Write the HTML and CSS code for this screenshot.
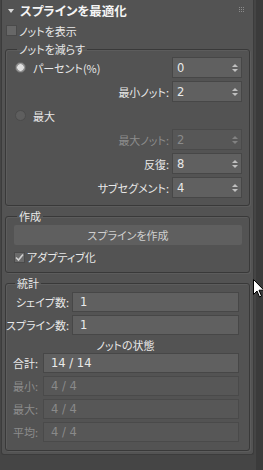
FILE: index.html
```html
<!DOCTYPE html>
<html lang="ja">
<head>
<meta charset="utf-8">
<link rel="stylesheet" href="styles.css">
</head>
<body>
<div class="screen">
  <div class="panel">
    <div class="title">
      <span class="tri"></span>
      <span class="title-text">スプラインを最適化</span>
      <svg class="grip" width="6" height="6" viewBox="0 0 6 6"><g fill="#8a8a8a"><rect x="0" y="0" width="1" height="1"/><rect x="2" y="0" width="1" height="1"/><rect x="4" y="0" width="1" height="1"/><rect x="0" y="2" width="1" height="1"/><rect x="2" y="2" width="1" height="1"/><rect x="4" y="2" width="1" height="1"/><rect x="0" y="4" width="1" height="1"/><rect x="2" y="4" width="1" height="1"/><rect x="4" y="4" width="1" height="1"/></g></svg>
    </div>
    <div class="checkrow top-check">
      <span class="cbox"></span>
      <span class="lbl">ノットを表示</span>
    </div>

    <fieldset class="group g1">
      <legend>ノットを減らす</legend>
      <div class="row">
        <span class="radio on"></span>
        <span class="lbl">パーセント(%)</span>
        <span class="spin"><span class="val">0</span><span class="arrows"><i class="up"></i><i class="dn"></i></span></span>
      </div>
      <div class="row">
        <span class="flabel">最小ノット:</span>
        <span class="spin"><span class="val">2</span><span class="arrows"><i class="up"></i><i class="dn"></i></span></span>
      </div>
      <div class="row">
        <span class="radio"></span>
        <span class="lbl">最大</span>
      </div>
      <div class="row">
        <span class="flabel dis">最大ノット:</span>
        <span class="spin dis"><span class="val">2</span><span class="arrows"><i class="up"></i><i class="dn"></i></span></span>
      </div>
      <div class="row">
        <span class="flabel">反復:</span>
        <span class="spin"><span class="val">8</span><span class="arrows"><i class="up"></i><i class="dn"></i></span></span>
      </div>
      <div class="row">
        <span class="flabel">サブセグメント:</span>
        <span class="spin"><span class="val">4</span><span class="arrows"><i class="up"></i><i class="dn"></i></span></span>
      </div>
    </fieldset>

    <fieldset class="group g2">
      <legend>作成</legend>
      <div class="btn">スプラインを作成</div>
      <div class="checkrow ad-check">
        <span class="cbox checked"><svg width="9" height="9" viewBox="0 0 9 9"><path d="M1 4.5 L3.5 7 L8 1.5" fill="none" stroke="#d0d0d0" stroke-width="1.6"/></svg></span>
        <span class="lbl">アダプティブ化</span>
      </div>
    </fieldset>

    <fieldset class="group g3">
      <legend>統計</legend>
      <div class="srow">
        <span class="slabel w1">シェイプ数:</span>
        <span class="field">1</span>
      </div>
      <div class="srow">
        <span class="slabel w1">スプライン数:</span>
        <span class="field">1</span>
      </div>
      <div class="subhead">ノットの状態</div>
      <div class="srow">
        <span class="slabel w2">合計:</span>
        <span class="field f2">14 / 14</span>
      </div>
      <div class="srow">
        <span class="slabel w2 dis">最小:</span>
        <span class="field f2 dis">4 / 4</span>
      </div>
      <div class="srow">
        <span class="slabel w2 dis">最大:</span>
        <span class="field f2 dis">4 / 4</span>
      </div>
      <div class="srow">
        <span class="slabel w2 dis">平均:</span>
        <span class="field f2 dis">4 / 4</span>
      </div>
    </fieldset>
  </div>
  <div class="scroll"></div>
  <svg class="cursor" width="12" height="20" viewBox="0 0 12 20"><path d="M0.5 0.5 L0.5 15.5 L4 12 L6.5 18 L8.5 17 L6 11.2 L11 11.2 Z" fill="#fff" stroke="#000" stroke-width="1"/></svg>
</div>
</body>
</html>
```
FILE: styles.css
```css
* { box-sizing: border-box; }
html, body { margin: 0; padding: 0; }
body {
  width: 263px;
  height: 470px;
  background: #454545;
  font-family: "Noto Sans CJK JP", "Noto Sans", sans-serif;
  font-size: 11px;
  font-feature-settings: "palt";
  color: #e8e8e8;
  overflow: hidden;
  white-space: nowrap;
}
.screen {
  position: relative;
  display: flex;
  height: 470px;
}
.panel {
  margin-left: 1px;
  width: 253px;
  height: 455px;
  background: #535353;
  border: 1px solid #3c3c3c;
  border-top: none;
  border-radius: 0 0 3px 3px;
  display: flex;
  flex-direction: column;
}
.scroll {
  margin-left: 2px;
  width: 7px;
  height: 470px;
  background: #3b3b3b;
}
.title {
  height: 21px;
  display: flex;
  align-items: center;
  padding-left: 6px;
  position: relative;
}
.tri {
  width: 0; height: 0;
  border-left: 3px solid transparent;
  border-right: 3px solid transparent;
  border-top: 4px solid #d8d8d8;
  margin-right: 6px;
}
.title-text {
  font-weight: bold;
  font-size: 12.5px;
  color: #f4f4f4;
  line-height: 21px;
}
.grip { position: absolute; right: 8px; top: 7px; }

.checkrow {
  display: flex;
  align-items: center;
}
.top-check { height: 19px; padding-left: 4px; }
.cbox {
  width: 11px; height: 11px;
  background: #676767;
  border: 1px solid #4a4a4a;
  margin-right: 2px;
  display: flex; align-items: center; justify-content: center;
}
.cbox.checked { background: #6a6a6a; }
.lbl { line-height: 16px; }

.group {
  margin: 2px 0 0 3px;
  width: 245px;
  border: 1px solid #393939;
  box-shadow: inset 1px 1px 0 #5c5c5c, 1px 1px 0 #5c5c5c;
  border-radius: 3px;
  padding: 0;
  min-width: 0;
}
.group legend {
  padding: 0 2px;
  margin-left: 3px;
  line-height: 14px;
  height: 14px;
}
.g1 { padding: 1px 7px 7px 8px; }
.row {
  height: 21px;
  display: flex;
  align-items: center;
  margin-bottom: 3px;
}
.row:last-child { margin-bottom: 0; }
.radio {
  width: 11px; height: 11px;
  border-radius: 50%;
  background: #5e5e5e;
  border: 1px solid #4b4b4b;
  margin: 0 7px 0 1px;
}
.radio.on {
  background: radial-gradient(circle, #e0e0e0 0 3px, #9a9a9a 3.5px);
  border-color: #6a6a6a;
}
.row .lbl { flex: 1; }
.flabel {
  flex: 1;
  text-align: right;
  padding-right: 3px;
}
.dis { color: #8c8c8c; }
.spin {
  margin-left: auto;
  width: 70px;
  height: 21px;
  background: #606060;
  border: 1px solid #474747;
  display: flex;
  align-items: center;
  padding-left: 4px;
  color: #eaeaea;
}
.spin.dis { background: #575757; color: #8a8a8a; border-color: #4a4a4a; }
.val { flex: 1; font-family: "DejaVu Sans", sans-serif; font-size: 11.5px; }
.arrows {
  width: 12px;
  display: flex;
  flex-direction: column;
  align-items: center;
  gap: 2px;
}
.arrows i {
  display: block;
  width: 0; height: 0;
  border-left: 3px solid transparent;
  border-right: 3px solid transparent;
}
.arrows .up { border-bottom: 3px solid #c0c0c0; }
.arrows .dn { border-top: 3px solid #c0c0c0; }
.spin.dis .arrows .up { border-bottom-color: #828282; }
.spin.dis .arrows .dn { border-top-color: #828282; }

.g2 { margin-top: 3px; padding: 2px 7px 7px 8px; }
.btn {
  height: 20px;
  background: #5f5f5f;
  border-radius: 2px;
  text-align: center;
  line-height: 20px;
  color: #cfcfcf;
}
.ad-check { height: 16px; margin-top: 4px; padding-left: 0; }
.ad-check .cbox { margin-right: 2px; }

.g3 { margin-top: 3px; padding: 2px 10px 8px 6px; }
.srow {
  height: 20px;
  display: flex;
  align-items: center;
  margin-bottom: 3px;
}
.srow:last-child { margin-bottom: 0; }
.slabel { padding-right: 3px; flex: none; display: flex; }
.slabel.w1 { width: 60px; justify-content: flex-end; }
.slabel.w2 { width: 31px; justify-content: flex-start; padding-left: 1px; }
.field {
  flex: 1;
  height: 20px;
  background: #606060;
  border: 1px solid #474747;
  padding-left: 7px;
  line-height: 18px;
  font-family: "DejaVu Sans", sans-serif;
  font-size: 11.5px;
  color: #eaeaea;
}
.field.dis { background: #575757; color: #8a8a8a; border-color: #4a4a4a; }
.subhead {
  height: 16px;
  text-align: center;
  line-height: 16px;
  margin: -1px 0 0 0;
}
.cursor { position: absolute; left: 253px; top: 279px; }
```
